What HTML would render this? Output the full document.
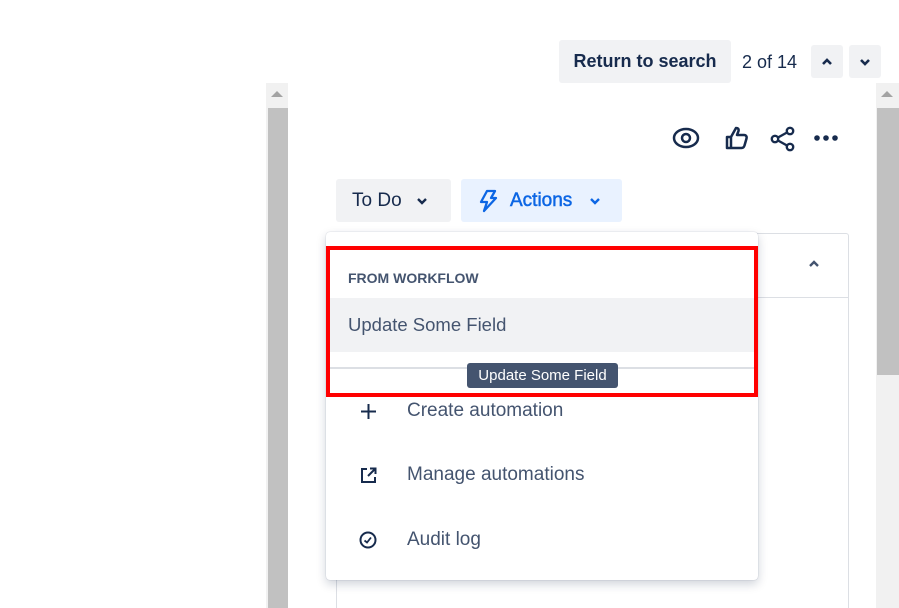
<!DOCTYPE html>
<html style="overflow:hidden;width:899px;height:608px"><head><style>
body{margin:0;width:899px;height:608px;background:#fff;position:relative;overflow:hidden;font-family:"Liberation Sans",sans-serif;color:#172b4d}
.a{position:absolute}
.btn{position:absolute;border-radius:3px;background:#f1f2f4;display:flex;align-items:center;font-size:18px}
</style></head><body>
<div class="a" style="left:266px;top:83px;width:22px;height:525px;background:#f1f1f1"></div>
<div class="a" style="left:268px;top:108px;width:20px;height:500px;background:#c1c1c1"></div>
<div class="a" style="left:271px;top:91px;width:0;height:0;border-left:6px solid transparent;border-right:6px solid transparent;border-bottom:6px solid #a3a3a3"></div>
<div class="a" style="left:876px;top:83px;width:23px;height:525px;background:#f1f1f1"></div>
<div class="a" style="left:877px;top:108px;width:22px;height:267px;background:#c1c1c1"></div>
<div class="a" style="left:881px;top:91px;width:0;height:0;border-left:6px solid transparent;border-right:6px solid transparent;border-bottom:6px solid #a3a3a3"></div>

<div class="btn" style="left:559px;top:40px;width:172px;height:43px;justify-content:center;font-weight:bold;color:#172b4d;font-size:18px">Return to search</div>
<div class="a" style="left:742px;top:52px;font-size:18px;color:#172b4d">2 of 14</div>
<div class="btn" style="left:811px;top:45px;width:32px;height:33px;justify-content:center"><svg width="14" height="10" viewBox="0 0 14 10"><path d="M3 7l4-4 4 4" stroke="#172b4d" stroke-width="2.6" fill="none"/></svg></div>
<div class="btn" style="left:849px;top:45px;width:32px;height:33px;justify-content:center"><svg width="14" height="10" viewBox="0 0 14 10"><path d="M3 3l4 4 4-4" stroke="#172b4d" stroke-width="2.6" fill="none"/></svg></div>

<svg class="a" style="left:672px;top:126px" width="28" height="24" viewBox="0 0 28 24"><ellipse cx="14" cy="12" rx="12" ry="9" stroke="#172b4d" stroke-width="2.5" fill="none"/><circle cx="14" cy="12" r="4" stroke="#172b4d" stroke-width="2.5" fill="none"/></svg>
<svg class="a" style="left:725px;top:125px" width="24" height="26" viewBox="0 0 24 26"><path d="M2 12h4v11H2z M6 12l5-9c2 0 3 1 2.5 3L12 10h7c2 0 3 1.5 2.5 3.5l-2 7c-.5 1.5-1.5 2.5-3 2.5H6" stroke="#172b4d" stroke-width="2.5" fill="none" stroke-linejoin="round"/></svg>
<svg class="a" style="left:770px;top:126px" width="26" height="26" viewBox="0 0 26 26"><circle cx="20" cy="5" r="3.2" stroke="#172b4d" stroke-width="2.4" fill="none"/><circle cx="5" cy="13" r="3.2" stroke="#172b4d" stroke-width="2.4" fill="none"/><circle cx="20" cy="21" r="3.2" stroke="#172b4d" stroke-width="2.4" fill="none"/><path d="M8 11.5l9-5M8 14.5l9 5" stroke="#172b4d" stroke-width="2.4"/></svg>
<svg class="a" style="left:813px;top:134px" width="26" height="8"><circle cx="4" cy="4" r="2.8" fill="#172b4d"/><circle cx="13" cy="4" r="2.8" fill="#172b4d"/><circle cx="22" cy="4" r="2.8" fill="#172b4d"/></svg>

<div class="btn" style="left:336px;top:179px;width:115px;height:43px;padding-left:16px;box-sizing:border-box;font-size:19px">To Do<svg style="margin-left:14px" width="12" height="8" viewBox="0 0 12 8"><path d="M2 2l4 4 4-4" stroke="#172b4d" stroke-width="2.4" fill="none"/></svg></div>
<div class="btn" style="left:461px;top:179px;width:161px;height:43px;background:#e9f2ff;color:#0c66e4;padding-left:17px;box-sizing:border-box;font-size:19px"><svg width="20" height="24" viewBox="0 0 20 24"><path d="M9 2h8l-4 7h5L6 22l3-9H3z" stroke="#0c66e4" stroke-width="2.3" fill="none" stroke-linejoin="round"/></svg><span style="margin-left:12px;-webkit-text-stroke:0.5px #0c66e4">Actions</span><svg style="margin-left:17px" width="12" height="8" viewBox="0 0 12 8"><path d="M2 2l4 4 4-4" stroke="#0c66e4" stroke-width="2.4" fill="none"/></svg></div>

<div class="a" style="left:336px;top:233px;width:511px;height:380px;border:1px solid #dcdfe4;border-radius:3px"></div>
<div class="a" style="left:336px;top:297px;width:512px;height:1px;background:#dcdfe4"></div>
<svg class="a" style="left:807px;top:259px" width="14" height="10" viewBox="0 0 14 10"><path d="M3 7l4-4 4 4" stroke="#44546f" stroke-width="2.4" fill="none"/></svg>

<div class="a" style="left:326px;top:232px;width:432px;height:348px;background:#fff;border-radius:4px;box-shadow:0 4px 10px rgba(9,30,66,.2),0 0 1px rgba(9,30,66,.3)"></div>
<div class="a" style="left:348px;top:270px;font-size:14px;font-weight:bold;color:#44546f">FROM WORKFLOW</div>
<div class="a" style="left:326px;top:298px;width:428px;height:54px;background:#f1f2f4"></div>
<div class="a" style="left:348px;top:314px;font-size:18.5px;color:#44546f">Update Some Field</div>
<div class="a" style="left:326px;top:367px;width:428px;height:2px;background:#dcdfe4"></div>
<div class="a" style="left:467px;top:363px;width:151px;height:25px;background:#44546f;border-radius:3px;color:#fff;font-size:15px;text-align:center;line-height:26px">Update Some Field</div>
<div class="a" style="left:326px;top:246px;width:424px;height:143px;border:4px solid #ff0000"></div>

<svg class="a" style="left:360px;top:403px" width="17" height="17"><path d="M8.5 1v15M1 8.5h15" stroke="#172b4d" stroke-width="2"/></svg>
<div class="a" style="left:407px;top:400px;font-size:19px;color:#44546f">Create automation</div>
<svg class="a" style="left:360px;top:467px" width="17" height="17" viewBox="0 0 17 17"><path d="M7 2H2v13h13v-5M10 1.5h5.5V7M15.5 1.5L8 9" stroke="#172b4d" stroke-width="2" fill="none"/></svg>
<div class="a" style="left:407px;top:464px;font-size:19px;color:#44546f">Manage automations</div>
<svg class="a" style="left:359px;top:531px" width="18" height="18" viewBox="0 0 18 18"><circle cx="9" cy="9" r="7.5" stroke="#172b4d" stroke-width="2" fill="none"/><path d="M5.5 9.5l2.5 2 4-5" stroke="#172b4d" stroke-width="1.8" fill="none"/></svg>
<div class="a" style="left:407px;top:529px;font-size:19px;color:#44546f">Audit log</div>
</body></html>
